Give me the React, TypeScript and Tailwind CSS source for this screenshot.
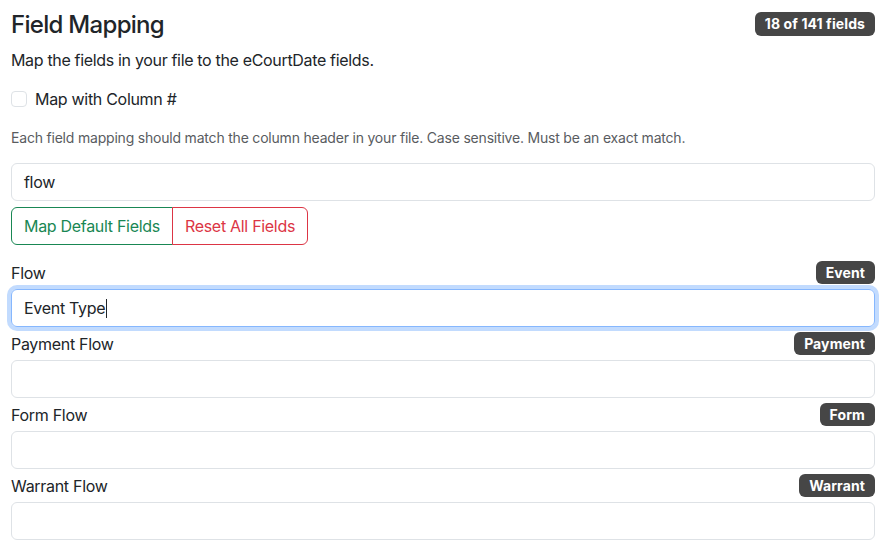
import React from 'react';

type Mapping = {
  label: string;
  badge: string;
  value?: string;
  focused?: boolean;
};

const mappings: Mapping[] = [
  { label: 'Flow', badge: 'Event', value: 'Event Type', focused: true },
  { label: 'Payment Flow', badge: 'Payment' },
  { label: 'Form Flow', badge: 'Form' },
  { label: 'Warrant Flow', badge: 'Warrant' },
];

const Badge: React.FC<{ children: React.ReactNode; className?: string }> = ({ children, className }) => (
  <span
    className={
      'inline-flex items-center rounded-[6px] bg-[#464646] px-[10px] text-[14px] font-bold leading-none tracking-[0.1px] text-white ' +
      (className ?? '')
    }
  >
    {children}
  </span>
);

const FieldRow: React.FC<{ mapping: Mapping; first: boolean }> = ({ mapping, first }) => {
  return (
    <div>
      <div className={'flex h-[23px] items-center justify-between mb-[5px] ' + (first ? 'mt-[16px]' : 'mt-[5px]')}>
        <span className="text-[16px] tracking-[-0.3px] text-[#212529]">{mapping.label}</span>
        <Badge className="h-[23px]">{mapping.badge}</Badge>
      </div>
      {mapping.focused ? (
        <div className="flex h-[38px] items-center rounded-[6px] border border-[#86b7fe] px-[12px] text-[16px] tracking-[-0.3px] text-[#212529] shadow-[0_0_0_4px_rgba(13,110,253,0.25)]">
          {mapping.value}
          <span className="ml-[1px] inline-block h-[19px] w-[1px] bg-[#212529]" />
        </div>
      ) : (
        <div className="flex h-[38px] items-center rounded-[6px] border border-[#dee2e6] px-[12px] text-[16px] text-[#212529]">
          {mapping.value}
        </div>
      )}
    </div>
  );
};

export default function App() {
  return (
    <div
      className="min-h-[555px] w-[884px] bg-white pl-[11px] pr-[9px] text-[#212529]"
      style={{ fontFamily: 'Inter, "Noto Sans", sans-serif' }}
    >
      {/* header */}
      <div className="mt-[10px] flex h-[29px] items-center justify-between">
        <h4 className="text-[24px] font-medium leading-[29px] tracking-[-0.7px]">Field Mapping</h4>
        <Badge className="-mt-[2px] h-[24px]">18 of 141 fields</Badge>
      </div>
      <p className="mt-[9px] text-[16px] leading-[24px] tracking-[-0.33px]">
        Map the fields in your file to the eCourtDate fields.
      </p>

      <label className="mt-[15px] flex h-[24px] items-center gap-[8px] text-[16px] tracking-[-0.3px]">
        <span className="inline-block h-[16px] w-[16px] rounded-[4px] border border-[#dee2e6] bg-white" />
        Map with Column #
      </label>

      <p className="mt-[16px] text-[14px] leading-[21px] tracking-[-0.2px] text-[#595c5f]">
        Each field mapping should match the column header in your file. Case sensitive. Must be an exact match.
      </p>

      <div className="mt-[15px] flex h-[38px] items-center rounded-[6px] border border-[#dee2e6] px-[12px] text-[16px] tracking-[-0.3px]">
        flow
      </div>

      <div className="mt-[6px] flex">
        <button className="h-[38px] rounded-l-[6px] border border-[#198754] px-[12px] text-[16px] tracking-[-0.3px] text-[#198754]">
          Map Default Fields
        </button>
        <button className="-ml-[1px] h-[38px] rounded-r-[6px] border border-[#dc3545] px-[12px] text-[16px] tracking-[-0.3px] text-[#dc3545]">
          Reset All Fields
        </button>
      </div>

      {mappings.map((m, i) => (
        <FieldRow key={m.label} mapping={m} first={i === 0} />
      ))}
    </div>
  );
}
